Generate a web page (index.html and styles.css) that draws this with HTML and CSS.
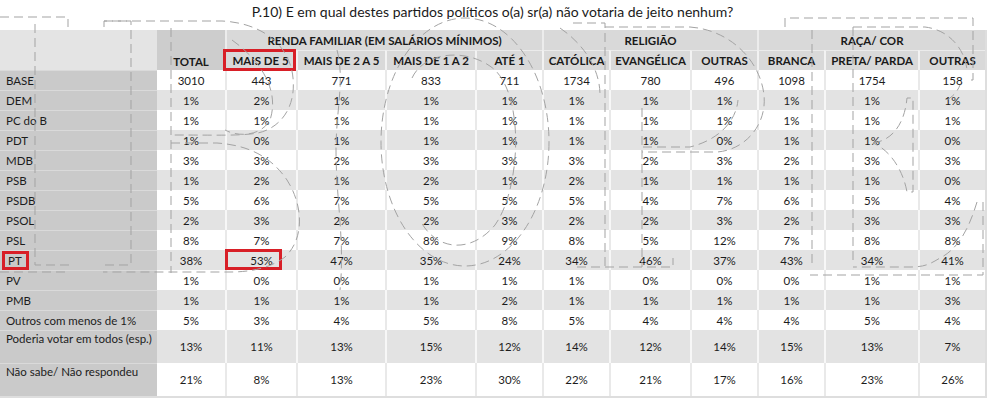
FILE: index.html
```html
<!DOCTYPE html>
<html lang="pt">
<head>
<meta charset="utf-8">
<title>P.10</title>
<link rel="stylesheet" href="styles.css">
</head>
<body>
<div class="page">
  <div class="title">P.10) E em qual destes partidos políticos o(a) sr(a) não votaria de jeito nenhum?</div>
  <table class="grid">
    <colgroup>
      <col class="c-label"><col class="c-total"><col class="c-m5"><col class="c-m25"><col class="c-m12"><col class="c-a1">
      <col class="c-cat"><col class="c-eva"><col class="c-out"><col class="c-bra"><col class="c-pre"><col class="c-out2">
    </colgroup>
    <thead>
      <tr class="h1">
        <th class="hl" rowspan="2"></th>
        <th class="ht" rowspan="2">TOTAL</th>
        <th class="hg" colspan="4">RENDA FAMILIAR (EM SALÁRIOS MÍNIMOS)</th>
        <th class="hg" colspan="3">RELIGIÃO</th>
        <th class="hg" colspan="3">RAÇA/ COR</th>
      </tr>
      <tr class="h2">
        <th class="hs mark-head">MAIS DE 5</th>
        <th class="hs">MAIS DE 2 A 5</th>
        <th class="hs">MAIS DE 1 A 2</th>
        <th class="hs">ATÉ 1</th>
        <th class="hs">CATÓLICA</th>
        <th class="hs">EVANGÉLICA</th>
        <th class="hs">OUTRAS</th>
        <th class="hs">BRANCA</th>
        <th class="hs">PRETA/ PARDA</th>
        <th class="hs">OUTRAS</th>
      </tr>
    </thead>
    <tbody>
      <tr class="w"><th>BASE</th><td>3010</td><td>443</td><td>771</td><td>833</td><td>711</td><td>1734</td><td>780</td><td>496</td><td>1098</td><td>1754</td><td>158</td></tr>
      <tr class="g"><th>DEM</th><td>1%</td><td>2%</td><td>1%</td><td>1%</td><td>1%</td><td>1%</td><td>1%</td><td>1%</td><td>1%</td><td>1%</td><td>1%</td></tr>
      <tr class="w"><th>PC do B</th><td>1%</td><td>1%</td><td>1%</td><td>1%</td><td>1%</td><td>1%</td><td>1%</td><td>1%</td><td>1%</td><td>1%</td><td>1%</td></tr>
      <tr class="g"><th>PDT</th><td>1%</td><td>0%</td><td>1%</td><td>1%</td><td>1%</td><td>1%</td><td>1%</td><td>0%</td><td>1%</td><td>1%</td><td>0%</td></tr>
      <tr class="w"><th>MDB</th><td>3%</td><td>3%</td><td>2%</td><td>3%</td><td>3%</td><td>3%</td><td>2%</td><td>3%</td><td>2%</td><td>3%</td><td>3%</td></tr>
      <tr class="g"><th>PSB</th><td>1%</td><td>2%</td><td>1%</td><td>2%</td><td>1%</td><td>2%</td><td>1%</td><td>1%</td><td>1%</td><td>1%</td><td>0%</td></tr>
      <tr class="w"><th>PSDB</th><td>5%</td><td>6%</td><td>7%</td><td>5%</td><td>5%</td><td>5%</td><td>4%</td><td>7%</td><td>6%</td><td>5%</td><td>4%</td></tr>
      <tr class="g"><th>PSOL</th><td>2%</td><td>3%</td><td>2%</td><td>2%</td><td>3%</td><td>2%</td><td>2%</td><td>3%</td><td>2%</td><td>3%</td><td>3%</td></tr>
      <tr class="w"><th>PSL</th><td>8%</td><td>7%</td><td>7%</td><td>8%</td><td>9%</td><td>8%</td><td>5%</td><td>12%</td><td>7%</td><td>8%</td><td>8%</td></tr>
      <tr class="g"><th><span class="mark-label">PT</span></th><td>38%</td><td class="mark-cell">53%</td><td>47%</td><td>35%</td><td>24%</td><td>34%</td><td>46%</td><td>37%</td><td>43%</td><td>34%</td><td>41%</td></tr>
      <tr class="w"><th>PV</th><td>1%</td><td>0%</td><td>0%</td><td>1%</td><td>1%</td><td>1%</td><td>0%</td><td>0%</td><td>0%</td><td>1%</td><td>1%</td></tr>
      <tr class="g"><th>PMB</th><td>1%</td><td>1%</td><td>1%</td><td>1%</td><td>2%</td><td>1%</td><td>1%</td><td>1%</td><td>1%</td><td>1%</td><td>3%</td></tr>
      <tr class="w"><th>Outros com menos de 1%</th><td>5%</td><td>3%</td><td>4%</td><td>5%</td><td>8%</td><td>5%</td><td>4%</td><td>4%</td><td>4%</td><td>5%</td><td>4%</td></tr>
      <tr class="g tall"><th>Poderia votar em todos (esp.)</th><td>13%</td><td>11%</td><td>13%</td><td>15%</td><td>12%</td><td>14%</td><td>12%</td><td>14%</td><td>15%</td><td>13%</td><td>7%</td></tr>
      <tr class="w tall"><th>Não sabe/ Não respondeu</th><td>21%</td><td>8%</td><td>13%</td><td>23%</td><td>30%</td><td>22%</td><td>21%</td><td>17%</td><td>16%</td><td>23%</td><td>26%</td></tr>
    </tbody>
  </table>
  <svg class="watermark" width="993" height="400" viewBox="0 0 993 400" aria-hidden="true">
    <g fill="none" stroke="#a3a3a3" stroke-width="1" stroke-dasharray="9 5">
      <!-- I -->
      <path d="M0 17 H68 V27"/>
      <path d="M35 24 V265 H70"/>
      <path d="M104 27 V21 H131 V265 H104"/>
      <path d="M0 272 H70"/>
      <!-- B -->
      <path d="M171 28 V273"/>
      <path d="M104 21 H222 C262 23 290 45 293 78 C296 108 280 128 258 133 C240 136 220 135 171 135"/>
      <path d="M171 143 H217 C246 145 270 155 287 180 C303 205 305 238 285 257 C268 270 245 272 230 272 H103"/>
      <path d="M232 40 C260 60 280 90 270 120 C262 135 240 138 225 130"/>
      <path d="M337 50 C345 80 336 110 336 150 C336 200 345 240 340 290"/>
      <!-- O -->
      <ellipse cx="465" cy="142" rx="84" ry="124"/>
      <path d="M412 78 C425 50 470 48 495 70 C525 100 520 190 495 225 C470 255 435 250 420 220"/>
      <!-- P -->
      <path d="M573 23 H605 V267"/>
      <path d="M577 267 H673 V258"/>
      <path d="M642 108 V267"/>
      <path d="M605 27 H690 C730 30 760 60 764 95 C767 125 745 150 717 152 H642"/>
      <path d="M643 147 H690 C718 140 736 122 738 100"/>
      <path d="M560 28 C585 45 600 70 600 95"/>
      <!-- E -->
      <path d="M785 27 V18 H973 V80 H966"/>
      <path d="M812 30 V265"/>
      <path d="M853 27 V265"/>
      <path d="M853 27 H925 C950 30 965 50 967 70"/>
      <path d="M873 143 C895 140 905 120 907 98 H913 V192 H907 C903 170 890 150 873 143"/>
      <path d="M983 202 V275 H810"/>
      <path d="M977 202 C970 225 960 248 940 258 C930 264 925 267 910 267 H853"/>
      <path d="M947 100 C955 95 958 90 960 85"/>
    </g>
  </svg>
</div>
</body>
</html>
```

FILE: styles.css
```css
* { box-sizing: border-box; }

html, body {
  margin: 0;
  padding: 0;
  background: #ffffff;
}

body {
  font-family: Lato, "Open Sans", "Liberation Sans", sans-serif;
  color: #1c1c1c;
}

.page {
  position: relative;
  width: 993px;
  height: 400px;
  overflow: hidden;
}

.title {
  width: 985px;
  height: 30px;
  padding-top: 3px;
  text-align: center;
  font-size: 14px;
  line-height: 18px;
  color: #1a1a1a;
}

.grid {
  width: 987px;
  table-layout: fixed;
  border-collapse: separate;
  border-spacing: 0;
  font-size: 11.5px;
  border-right: 2px solid #dedede;
  border-bottom: 2px solid #dedede;
}

.c-label { width: 157px; }
.c-total { width: 68px; }
.c-m5 { width: 71px; }
.c-m25 { width: 89px; }
.c-m12 { width: 90px; }
.c-a1 { width: 67px; }
.c-cat { width: 67px; }
.c-eva { width: 81px; }
.c-out { width: 67px; }
.c-bra { width: 67px; }
.c-pre { width: 94px; }
.c-out2 { width: 67px; }

.grid th,
.grid td {
  padding: 0;
  white-space: nowrap;
}

/* header */
.h1 th, .h2 th {
  height: 20px;
  font-weight: 700;
  font-size: 11.5px;
  text-align: center;
  color: #1a1a1a;
}

.hl {
  background: #e4e4e4;
}

.ht {
  background: #cdcdcd;
  vertical-align: bottom;
  padding-bottom: 2px !important;
}

.hg {
  background: #d9d9d9;
  border-left: 2px solid #ececec;
}

.hs {
  background: #d9d9d9;
  border-left: 2px solid #f2f2f2;
  border-top: 1px solid #ebebeb;
}

.h2 th:first-child {
  border-left: none;
}

/* body */
tbody th {
  height: 20px;
  background: #cacaca;
  border-top: 1px solid #dadada;
  text-align: left;
  font-weight: 400;
  padding-left: 6px !important;
  font-size: 11.5px;
}

tbody td {
  height: 20px;
  text-align: center;
}

tr.w td {
  background: #ffffff;
  border-left: 2px solid #e9e9e9;
}

tr.g td {
  background: #e3e3e3;
  border-left: 2px solid #f7f7f7;
}

tbody tr td:nth-child(2) {
  border-left: none;
}

tr.tall th,
tr.tall td {
  height: 33px;
}

tr.tall th {
  vertical-align: top;
  padding-top: 1px !important;
}

/* red highlight marks */
.mark-head,
.mark-cell {
  position: relative;
}

.mark-head::after {
  content: "";
  position: absolute;
  left: -2px;
  right: 0;
  top: -2px;
  bottom: -1px;
  border: 3px solid #d81f27;
}

.mark-cell::after {
  content: "";
  position: absolute;
  left: -2px;
  width: 51px;
  top: -1px;
  bottom: 0;
  border: 3px solid #d81f27;
}

.mark-label {
  display: inline-block;
  margin-left: -4px;
  padding: 0 4px 0 3px;
  line-height: 13px;
  border: 3px solid #d81f27;
}

.watermark {
  position: absolute;
  left: 0;
  top: 0;
  pointer-events: none;
}
```
